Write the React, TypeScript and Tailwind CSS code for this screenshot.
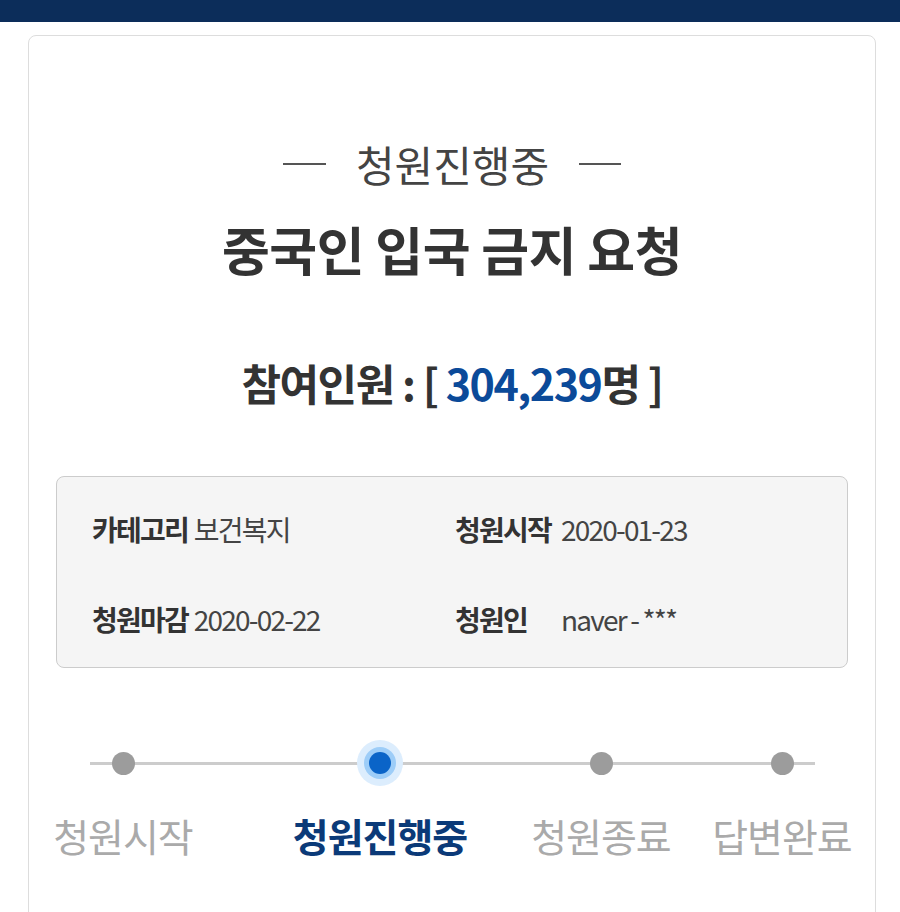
import React from 'react';

const steps = [
  { label: '청원시작', active: false },
  { label: '청원진행중', active: true },
  { label: '청원종료', active: false },
  { label: '답변완료', active: false },
];

const font = { fontFamily: '"Noto Sans CJK KR", "Noto Sans", sans-serif' };

const App: React.FC = () => {
  return (
    <div className="min-h-[912px] bg-white overflow-hidden" style={font}>
      <div className="h-[22px] bg-[#0c2d5a]" />

      <div className="ml-[28px] mr-[24px] mt-[13px] border border-[#dddddd] rounded-[8px] pt-[103px] pb-[120px]">
        <div className="flex items-center justify-center gap-[30px]">
          <div className="w-[43px] h-[2px] bg-[#555555]" />
          <p className="text-[42px] leading-[49px] text-[#444444]">청원진행중</p>
          <div className="w-[42px] h-[2px] bg-[#555555]" />
        </div>

        <h1 className="mt-[29px] text-center text-[52px] leading-[64px] font-bold text-[#333333] tracking-[-0.5px]">
          중국인 입국 금지 요청
        </h1>

        <p className="mt-[75px] text-center text-[43px] leading-[52px] font-bold text-[#333333] tracking-[-1.5px]">
          참여인원 : [ <span className="text-[#0b4a99]">304,239</span>명 ]
        </p>

        <div className="mx-[27px] mt-[68px] bg-[#f5f5f5] border border-[#cccccc] rounded-[8px] pl-[35px] pt-[35px] pb-[31px] grid grid-cols-[363px_1fr] gap-y-[56px] text-[28px] leading-[34px] tracking-[-1.8px]">
          <div className="flex gap-[6px]">
            <span className="font-bold text-[#333333]">카테고리</span>
            <span className="text-[#444444]">보건복지</span>
          </div>
          <div className="flex">
            <span className="w-[106px] font-bold text-[#333333]">청원시작</span>
            <span className="text-[#444444]">2020-01-23</span>
          </div>
          <div className="flex gap-[6px]">
            <span className="font-bold text-[#333333]">청원마감</span>
            <span className="text-[#444444]">2020-02-22</span>
          </div>
          <div className="flex">
            <span className="w-[106px] font-bold text-[#333333]">청원인</span>
            <span className="text-[#444444]">naver - ***</span>
          </div>
        </div>

        <div className="relative mt-[72px] pl-[24px] flex">
          <div className="absolute left-[61px] top-[22px] w-[725px] h-[3px] bg-[#cccccc]" />
          {steps.map((s, i) => (
            <div
              key={s.label}
              className={`relative w-[140px] flex flex-col items-center ${
                i === 1 ? 'ml-[117px]' : i === 2 ? 'ml-[81px]' : i === 3 ? 'ml-[41px]' : ''
              }`}
            >
              <div className="h-[46px] flex items-center justify-center">
                {s.active ? (
                  <div className="w-[46px] h-[46px] rounded-full bg-[#dcedfd] flex items-center justify-center">
                    <div className="w-[32px] h-[32px] rounded-full bg-[#9dcdf8] flex items-center justify-center">
                      <div className="w-[22px] h-[22px] rounded-full bg-[#0a64c8]" />
                    </div>
                  </div>
                ) : (
                  <div className="w-[23px] h-[23px] rounded-full bg-[#9c9c9c]" />
                )}
              </div>
              <p
                className={`mt-[26px] whitespace-nowrap text-[39px] leading-[47px] tracking-[-1px] ${
                  s.active ? 'font-bold text-[#0b3a78]' : 'text-[#aaaaaa]'
                }`}
              >
                {s.label}
              </p>
            </div>
          ))}
        </div>
      </div>
    </div>
  );
};

export default App;
